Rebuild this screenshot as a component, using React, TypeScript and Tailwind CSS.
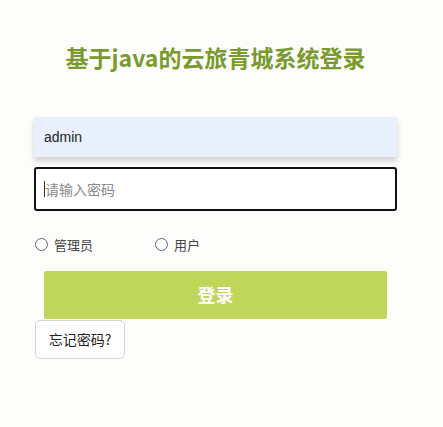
import { useState } from "react";

export default function App() {
  const [role, setRole] = useState("");

  return (
    <div
      className="min-h-screen w-full bg-[#fdfdfb]"
      style={{ fontFamily: '"Noto Sans CJK SC", "Liberation Sans", sans-serif' }}
    >
      <div className="ml-[34px] w-[363px] pt-[38px]">
        {/* Title */}
        <h1 className="text-center text-[23px] font-bold leading-[38px] text-[#7a9a2e]">
          基于java的云旅青城系统登录
        </h1>

        {/* Username */}
        <div className="mt-[41px] flex h-[40px] items-center bg-[#e8f0fe] px-[10px] shadow-[0_4px_6px_rgba(0,0,0,0.18)]">
          <span className="text-[14px] text-[#222]" style={{ fontFamily: '"Liberation Sans", sans-serif' }}>
            admin
          </span>
        </div>

        {/* Password */}
        <div className="mt-[10px] flex h-[44px] items-center rounded-[3px] border-2 border-[#111] bg-white px-[8px]">
          <span className="h-[16px] w-px bg-[#333]" />
          <span className="text-[14px] text-[#8a8a8a]">请输入密码</span>
        </div>

        {/* Role */}
        <div className="ml-px mt-[24px] flex items-center text-[13px] text-[#444]">
          <label className="flex items-center gap-[6px]" onClick={() => setRole("admin")}>
            <span className="h-[13px] w-[13px] rounded-full border border-[#666] bg-white" />
            管理员
          </label>
          <label className="ml-[62px] flex items-center gap-[6px]" onClick={() => setRole("user")}>
            <span className="h-[13px] w-[13px] rounded-full border border-[#666] bg-white" />
            用户
          </label>
          <span className="hidden">{role}</span>
        </div>

        {/* Login */}
        <button className="ml-[10px] mt-[16px] flex h-[48px] w-[343px] items-center justify-center rounded-[2px] bg-[#bfd65b] text-[18px] font-bold text-white">
          登录
        </button>

        {/* Forgot */}
        <button className="ml-px mt-px flex h-[39px] w-[90px] items-center justify-center rounded-[5px] border border-[#d4d4d4] bg-white text-[14px] text-[#222]">
          忘记密码?
        </button>
      </div>
    </div>
  );
}
